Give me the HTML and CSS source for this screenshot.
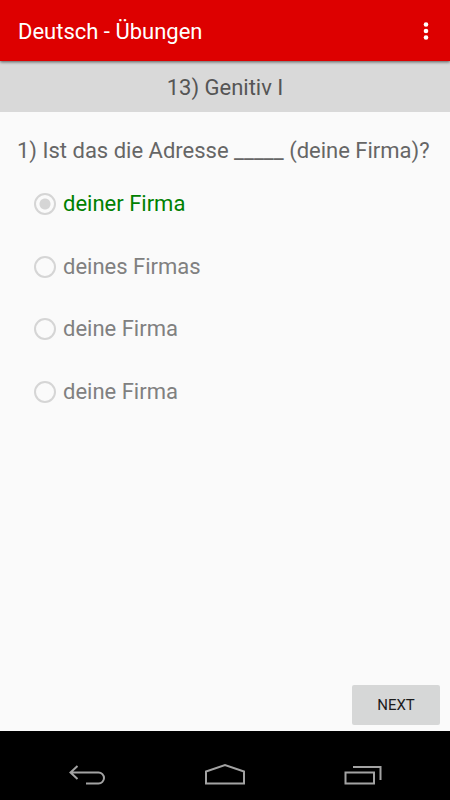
FILE: index.html
```html
<!DOCTYPE html>
<html lang="de">
<head>
<meta charset="utf-8">
<meta name="viewport" content="width=device-width, initial-scale=1">
<title>Deutsch - Übungen</title>
<link rel="stylesheet" href="styles.css">
</head>
<body>
<header class="app-bar">
  <h1 class="app-title">Deutsch - Übungen</h1>
  <button class="menu-button" type="button" aria-label="Menü">
    <svg width="6" height="20" viewBox="0 0 6 20" fill="#fff"><circle cx="3" cy="2.500" r="2.3"/><circle cx="3" cy="9" r="2.3"/><circle cx="3" cy="15.500" r="2.3"/></svg>
  </button>
</header>
<main class="exercise">
  <h2 class="topic">13) Genitiv I</h2>
  <form class="quiz">
    <fieldset class="question">
      <legend class="prompt">1) Ist das die Adresse _____ (deine Firma)?</legend>
      <div class="options">
        <label class="option option-correct"><input class="radio" type="radio" name="answer" checked>deiner Firma</label>
        <label class="option"><input class="radio" type="radio" name="answer">deines Firmas</label>
        <label class="option"><input class="radio" type="radio" name="answer">deine Firma</label>
        <label class="option"><input class="radio" type="radio" name="answer">deine Firma</label>
      </div>
    </fieldset>
    <button class="next" type="button">NEXT</button>
  </form>
</main>
<nav class="system-bar">
  <button class="system-button" type="button" aria-label="Zurück">
    <svg width="40" height="24" viewBox="0 0 40 24" fill="none" stroke="#a3a3a3" stroke-width="2"><path d="M9.500 4 2.500 10.500l7 6.500M2.500 10.500h28a5.500 5.500 0 0 1 0 11H18"/></svg>
  </button>
  <button class="system-button" type="button" aria-label="Startseite">
    <svg width="40" height="24" viewBox="0 0 40 24" fill="none" stroke="#a3a3a3" stroke-width="2"><path d="M1 21.500V9.500L20 3l19 6.500V21.500z"/></svg>
  </button>
  <button class="system-button" type="button" aria-label="Letzte Apps">
    <svg width="40" height="24" viewBox="0 0 40 24" fill="none" stroke="#a3a3a3" stroke-width="2"><path d="M3.500 10.500h28.500v11H3.500zM11 5h27.500v13"/></svg>
  </button>
</nav>
</body>
</html>
```
FILE: styles.css
```css
* {
  box-sizing: border-box;
}

body {
  display: flex;
  flex-direction: column;
  min-height: 100vh;
  margin: 0;
  background: #fafafa;
  color: #666;
  font-family: Roboto, "Liberation Sans", sans-serif;
  font-size: 22px;
  line-height: 28px;
}

button {
  border: 0;
  font-family: inherit;
}

svg {
  display: block;
}

.app-bar {
  position: relative;
  display: flex;
  align-items: center;
  justify-content: space-between;
  padding: 18px 16px 15px 18px;
  background: #dd0000;
  box-shadow: 0 1px 3px rgba(0, 0, 0, 0.6);
}

.app-title {
  margin: 0;
  color: #fff;
  font-size: 22px;
  font-weight: 400;
}

.menu-button {
  padding: 0 5px;
  background: transparent;
}

.exercise {
  display: flex;
  flex: 1;
  flex-direction: column;
}

.topic {
  margin: 0;
  padding: 13px 16px 10px;
  background: #d9d9d9;
  color: #555;
  font-size: 22px;
  font-weight: 400;
  text-align: center;
}

.quiz {
  display: flex;
  flex: 1;
  flex-direction: column;
  justify-content: space-between;
  padding: 25px 10px 6px 17px;
}

.question {
  min-width: 0;
  margin: 0;
  padding: 0;
  border: 0;
}

.prompt {
  padding: 0;
}

.options {
  display: grid;
  grid-template-rows: repeat(4, 1fr);
  min-height: 250px;
  margin-top: 8px;
  padding-left: 17px;
}

.option {
  display: flex;
  align-items: center;
  gap: 7px;
  color: #808080;
}

.option-correct {
  color: #008000;
}

.radio {
  flex: none;
  width: 22px;
  height: 22px;
  margin: 0;
  border: 2px solid #d5d5d5;
  border-radius: 50%;
  appearance: none;
}

.radio:checked {
  background: radial-gradient(circle, #d5d5d5 5px, transparent 6px);
}

.next {
  align-self: flex-end;
  min-width: 88px;
  padding: 6px 16px;
  border-radius: 2px;
  background: #d6d7d7;
  color: #1c1c1c;
  font-size: 15px;
  line-height: 28px;
}

.system-bar {
  display: grid;
  grid-template-columns: repeat(3, 1fr);
  padding: 31px 19px 14px;
  background: #000;
}

.system-button {
  display: flex;
  justify-content: center;
  padding: 0;
  background: transparent;
}
```
